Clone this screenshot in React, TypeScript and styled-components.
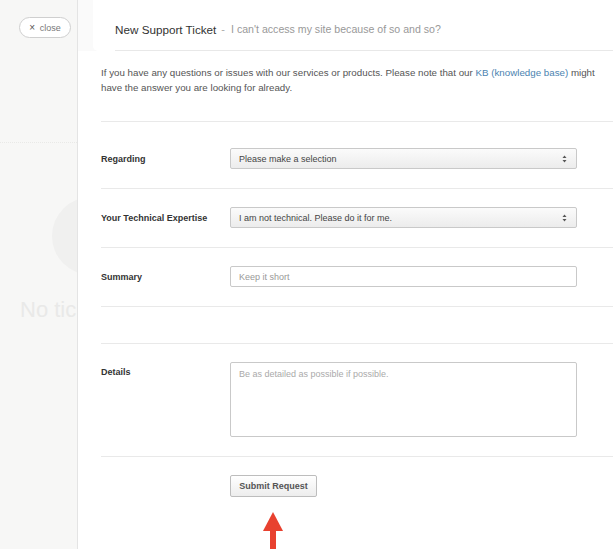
import styled, { createGlobalStyle } from 'styled-components';

const GlobalStyle = createGlobalStyle`
  html, body {
    margin: 0;
    padding: 0;
    background: #f7f7f6;
    font-family: "Liberation Sans", Arial, sans-serif;
  }
`;

const rows = [
  { label: 'Regarding', kind: 'select', value: 'Please make a selection' },
  { label: 'Your Technical Expertise', kind: 'select', value: 'I am not technical. Please do it for me.' },
  { label: 'Summary', kind: 'input', value: 'Keep it short' },
];

function SelectArrows() {
  return (
    <svg width="5" height="8" viewBox="0 0 5 8">
      <path d="M2.5 0.5 L4.5 3 L0.5 3 Z" fill="#555" />
      <path d="M2.5 7.5 L4.5 5 L0.5 5 Z" fill="#555" />
    </svg>
  );
}

function RedArrow() {
  return (
    <svg width="22" height="40" viewBox="0 0 22 40">
      <path d="M11 0 L21 19 L1 19 Z" fill="#e8412f" />
      <rect x="8" y="18" width="6" height="22" fill="#e8412f" />
    </svg>
  );
}

export default function App() {
  return (
    <Page>
      <GlobalStyle />
      <Sidebar>
        <CloseButton>
          <span>×</span> close
        </CloseButton>
        <DottedRule />
        <EmptyCircle />
        <EmptyText>No tickets yet</EmptyText>
      </Sidebar>
      <Panel>
        <HeaderStrip>
          <HeaderCard>
            <HeaderInner>
              <Title>New Support Ticket</Title>
              <Dash>-</Dash>
              <Subject>I can't access my site because of so and so?</Subject>
            </HeaderInner>
          </HeaderCard>
        </HeaderStrip>
        <Body>
          <Intro>
            If you have any questions or issues with our services or products. Please note that our{' '}
            <Link href="#">KB (knowledge base)</Link> might have the answer you are looking for already.
          </Intro>
          {rows.map((r, i) => (
            <Row key={r.label} first={i === 0}>
              <RowContent>
                <Label>{r.label}</Label>
                {r.kind === 'select' ? (
                  <Select>
                    {r.value}
                    <SelectArrows />
                  </Select>
                ) : (
                  <TextInput placeholder={r.value} />
                )}
              </RowContent>
            </Row>
          ))}
          <EmptyRow />
          <Row>
            <RowContent top>
              <Label top>Details</Label>
              <TextArea placeholder="Be as detailed as possible if possible." />
            </RowContent>
          </Row>
          <Row>
            <RowContent top>
              <span />
              <SubmitArea>
                <SubmitButton>Submit Request</SubmitButton>
                <ArrowWrap>
                  <RedArrow />
                </ArrowWrap>
              </SubmitArea>
            </RowContent>
          </Row>
        </Body>
      </Panel>
    </Page>
  );
}

const Page = styled.div`
  display: flex;
  width: 613px;
  height: 549px;
  overflow: hidden;
  background: #f7f7f6;
`;
const Sidebar = styled.aside`
  width: 77px;
  flex-shrink: 0;
  display: flex;
  flex-direction: column;
  overflow: hidden;
`;
const CloseButton = styled.button`
  margin: 17px 0 0 19px;
  width: 52px;
  height: 21px;
  padding: 0;
  border: 1px solid #cfcfcf;
  border-radius: 11px;
  background: #fff;
  color: #777;
  font-family: "Liberation Sans", Arial, sans-serif;
  font-size: 9px;
  text-align: center;
  span {
    font-size: 10px;
    color: #555;
    margin-right: 2px;
  }
`;
const DottedRule = styled.div`
  margin-top: 104px;
  width: 77px;
  border-top: 1px dotted #e9e9e7;
`;
const EmptyCircle = styled.div`
  margin: 54px 0 0 52px;
  width: 78px;
  height: 78px;
  flex-shrink: 0;
  border-radius: 50%;
  background: #f0f0ef;
`;
const EmptyText = styled.div`
  margin: 22px 0 0 20px;
  white-space: nowrap;
  font-size: 22px;
  color: #e9e9e8;
`;
const Panel = styled.main`
  flex: 1;
  background: #fff;
  border-left: 1px solid #e4e4e4;
  display: flex;
  flex-direction: column;
`;
const HeaderStrip = styled.div`
  background: #fafafa;
  padding-left: 15px;
`;
const HeaderCard = styled.div`
  background: #fff;
  border-bottom-left-radius: 5px;
  padding-left: 22px;
`;
const HeaderInner = styled.div`
  height: 51px;
  display: flex;
  align-items: center;
  border-bottom: 1px solid #e8e8e8;
  box-sizing: border-box;
  padding-top: 8px;
  white-space: nowrap;
`;
const Title = styled.span`
  font-size: 11.7px;
  color: #333;
`;
const Dash = styled.span`
  font-size: 11px;
  color: #aaa;
  margin: 0 6px 0 5px;
`;
const Subject = styled.span`
  font-size: 10.6px;
  color: #999;
`;
const Body = styled.div`
  padding-left: 23px;
`;
const Intro = styled.p`
  margin: 0;
  padding: 14px 0 26px 0;
  font-size: 9.75px;
  line-height: 15px;
  color: #555;
`;
const Link = styled.a`
  color: #4b83b0;
  text-decoration: none;
`;
const Row = styled.div<{ first?: boolean }>`
  border-top: 1px solid #e9e9e9;
  padding: ${p => (p.first ? '26px' : '18px')} 0 19px;
`;
const EmptyRow = styled.div`
  border-top: 1px solid #e9e9e9;
  height: 36px;
`;
const RowContent = styled.div<{ top?: boolean }>`
  display: grid;
  grid-template-columns: 129px 347px;
  align-items: ${p => (p.top ? 'start' : 'center')};
`;
const Label = styled.label<{ top?: boolean }>`
  font-size: 9px;
  font-weight: bold;
  color: #333;
  padding-top: ${p => (p.top ? '5px' : '0')};
`;
const Select = styled.div`
  height: 21px;
  box-sizing: border-box;
  border: 1px solid #c9c9c9;
  border-radius: 2px;
  background: linear-gradient(#fbfbfb, #ececec);
  display: flex;
  align-items: center;
  justify-content: space-between;
  padding: 0 9px 0 8px;
  font-size: 9px;
  color: #444;
`;
const TextInput = styled.input`
  height: 21px;
  box-sizing: border-box;
  border: 1px solid #c9c9c9;
  border-radius: 2px;
  padding: 0 8px;
  font-family: "Liberation Sans", Arial, sans-serif;
  font-size: 9px;
  &::placeholder {
    color: #999;
  }
`;
const TextArea = styled.textarea`
  height: 75px;
  box-sizing: border-box;
  border: 1px solid #c9c9c9;
  border-radius: 2px;
  padding: 6px 8px;
  resize: none;
  font-family: "Liberation Sans", Arial, sans-serif;
  font-size: 9px;
  &::placeholder {
    color: #aaa;
  }
`;
const SubmitArea = styled.div`
  display: flex;
  flex-direction: column;
  align-items: flex-start;
`;
const SubmitButton = styled.button`
  width: 87px;
  height: 22px;
  border: 1px solid #bdbdbd;
  border-radius: 2px;
  background: linear-gradient(#fff, #ededed);
  font-family: "Liberation Sans", Arial, sans-serif;
  font-size: 9px;
  font-weight: bold;
  color: #555;
  padding: 0;
`;
const ArrowWrap = styled.div`
  margin: 15px 0 0 32px;
  line-height: 0;
`;
